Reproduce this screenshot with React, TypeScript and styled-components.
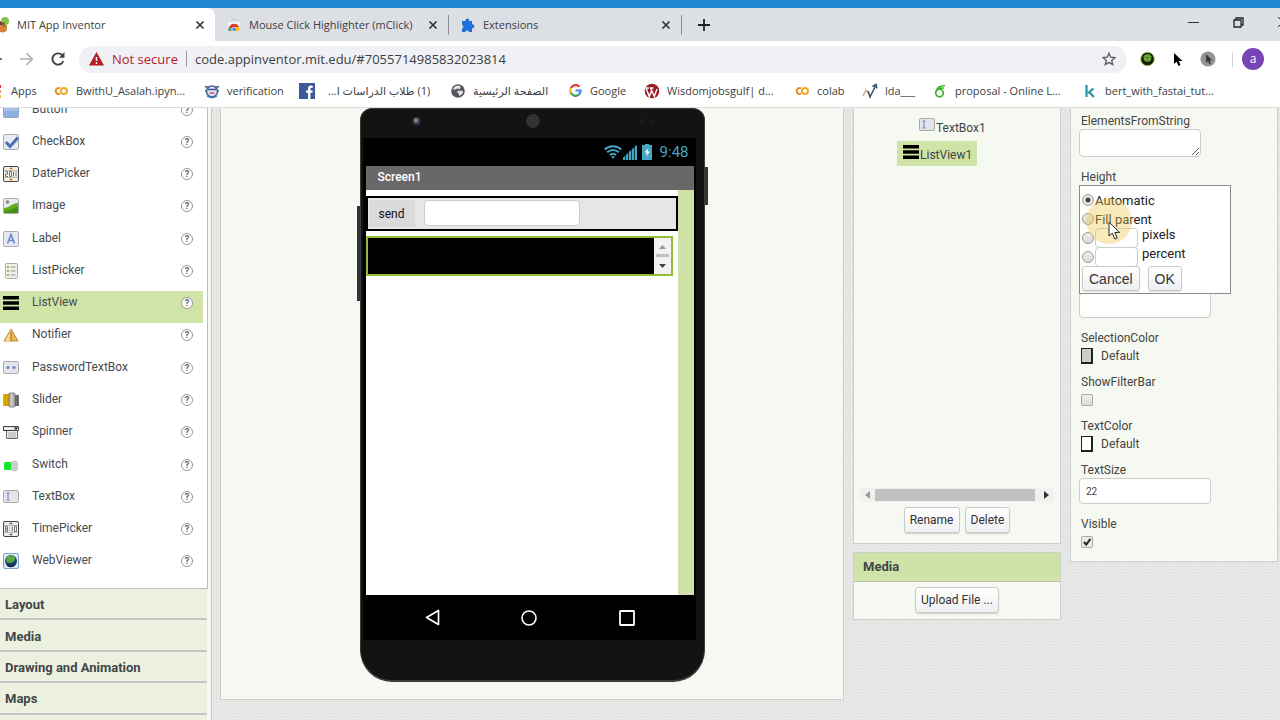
import React from "react";
import styled, { createGlobalStyle } from "styled-components";

const uiFont = '"Open Sans", "Noto Sans", "DejaVu Sans", sans-serif';
const appFont = 'Roboto, "Liberation Sans", sans-serif';

const GlobalStyle = createGlobalStyle`
  *, *::before, *::after { box-sizing: border-box; }
  body { margin: 0; background: #e6e6e6; font-family: ${appFont}; font-size: 12px; color: #444; }
  button, input, textarea { font: inherit; color: inherit; margin: 0; padding: 0; }
  button { border: 0; background: none; text-align: left; }
  a { color: inherit; text-decoration: none; }
  svg { display: block; flex: none; }
`;

const Page = styled.div`
  display: flex;
  flex-direction: column;
  height: 100vh;
  overflow: hidden;
`;

/* ---------- Browser chrome ---------- */

const Chrome = styled.header`
  flex: none;
  font-family: ${uiFont};
  background: #fff;
  border-bottom: 1px solid #dcdcdc;
`;

const TitleStrip = styled.div`
  height: 8px;
  background: #2287d5;
`;

const TabStrip = styled.div`
  display: flex;
  align-items: stretch;
  height: 33px;
  background: #dcdfe4;
`;

const Tab = styled.div<{ $active?: boolean; $width: number }>`
  display: flex;
  align-items: center;
  flex: none;
  width: ${(p) => p.$width}px;
  padding: 0 10px 0 ${(p) => (p.$active ? 0 : 12)}px;
  gap: 8px;
  background: ${(p) => (p.$active ? "#fff" : "transparent")};
  border-radius: 0 8px 0 0;
`;

const TabTitle = styled.a`
  flex: 1;
  min-width: 0;
  overflow: hidden;
  white-space: nowrap;
  font-size: 11px;
  line-height: 16px;
  color: #3c4043;
`;

const IconButton = styled.button`
  display: flex;
  align-items: center;
  justify-content: center;
  flex: none;
`;

const TabDivider = styled.span`
  align-self: center;
  flex: none;
  width: 1px;
  height: 20px;
  background: #8e9196;
`;

const NewTab = styled(IconButton)`
  width: 43px;
`;

const WindowControls = styled.div`
  display: flex;
  align-items: center;
  height: 28px;
  gap: 34px;
  margin-left: auto;
`;

const Toolbar = styled.div`
  display: flex;
  align-items: center;
  height: 34px;
  margin-top: 1px;
`;

const NavButtons = styled.div`
  display: flex;
  align-items: center;
  gap: 17px;
  width: 79px;
  flex: none;
`;

const AddressBar = styled.div`
  display: flex;
  align-items: center;
  flex: 1;
  min-width: 0;
  height: 27px;
  padding: 0 11px 0 10px;
  border-radius: 14px;
  background: #f0f1f4;
  font-size: 13px;
`;

const NotSecure = styled.span`
  margin-left: 8px;
  padding-right: 8px;
  border-right: 1px solid #9a9da1;
  line-height: 16px;
  color: #b3202c;
  white-space: nowrap;
`;

const UrlInput = styled.input`
  flex: 1;
  min-width: 0;
  margin-left: 8px;
  border: 0;
  outline: 0;
  background: transparent;
  color: #3c4043;
`;

const ToolbarEnd = styled.div`
  display: flex;
  align-items: center;
  flex: none;
  gap: 16px;
  padding: 0 16px 0 13px;
`;

const ToolbarDivider = styled.span`
  width: 1px;
  height: 15px;
  background: #d0d3d6;
`;

const Profile = styled.div`
  display: flex;
  align-items: center;
  gap: 9px;
`;

const Avatar = styled.button`
  width: 22px;
  height: 22px;
  border-radius: 50%;
  background: #7744b6;
  color: #fff;
  font-size: 12px;
  line-height: 20px;
  text-align: center;
`;

const BookmarkBar = styled.nav`
  display: flex;
  align-items: center;
  height: 31px;
  padding-bottom: 2px;
  overflow: hidden;
`;

const Bookmark = styled.a<{ $width: number }>`
  display: flex;
  align-items: center;
  flex: none;
  gap: 7px;
  width: ${(p) => p.$width}px;
  font-size: 11px;
  line-height: 16px;
  color: #3c4043;
  white-space: nowrap;
`;

const BookmarkIcon = styled.span`
  display: flex;
  justify-content: center;
  flex: none;
  width: 16px;
`;

const BookmarkLabel = styled.span<{ $rtl?: boolean }>`
  padding-left: ${(p) => (p.$rtl ? 6 : 0)}px;
`;

/* ---------- Workspace ---------- */

const Workspace = styled.main`
  display: flex;
  align-items: flex-start;
  flex: 1;
  min-height: 0;
  overflow: hidden;
  gap: 9px;
  padding-right: 2px;
  background-color: #e9e9ea;
  background-image:
    repeating-linear-gradient(0deg, rgba(0, 0, 0, 0.02) 0 1px, transparent 1px 3px),
    repeating-linear-gradient(90deg, rgba(0, 0, 0, 0.02) 0 1px, transparent 1px 3px);
`;

const Panel = styled.section`
  background: #f5f9f1;
  border: 1px solid #cdcfca;
  border-top: 0;
`;

const Palette = styled.aside`
  flex: none;
  width: 212px;
  padding-right: 3px;
  background: #f5f9f1;
  border-right: 1px solid #c6c8c4;
`;

const PaletteScroll = styled.div`
  overflow: hidden;
  background: #fff;
  border-right: 1px solid #bdbdbd;
  border-bottom: 1px solid #bdbdbd;
`;

const PaletteList = styled.ul`
  display: grid;
  grid-auto-rows: 1fr;
  height: 484px;
  margin: -11px 4px 7px 0;
  padding: 0;
  list-style: none;
`;

const PaletteRow = styled.li<{ $selected?: boolean }>`
  display: flex;
  align-items: center;
  padding: 0 10px 7px 3px;
  background: ${(p) => (p.$selected ? "#d1e4a8" : "transparent")};
`;

const PaletteName = styled.button`
  flex: 1;
  padding: 0 0 2px 13px;
  line-height: 16px;
  color: #444b50;
`;

const Help = styled.button`
  width: 12px;
  height: 12px;
  border: 1px solid #999;
  border-radius: 50%;
  background: #fff;
  font-size: 9px;
  font-weight: 700;
  line-height: 10px;
  text-align: center;
  color: #666;
`;

const Categories = styled.div`
  display: grid;
  grid-auto-rows: 1fr;
  height: 157px;
  margin-right: 1px;
`;

const Category = styled.button`
  padding: 2px 0 0 5px;
  border-bottom: 2px solid #c3c5c1;
  background: #ecf1df;
  font-size: 13px;
  font-weight: 700;
  color: #41464a;
`;

/* ---------- Phone ---------- */

const Viewer = styled(Panel)`
  display: flex;
  justify-content: center;
  flex: 1;
  min-width: 360px;
  padding-bottom: 17px;
  margin-left: -1px;
`;

const Phone = styled.div`
  position: relative;
  width: 345px;
  padding: 0 8px 40px 2px;
  background: #131313;
  border: 1px solid #3a3b3d;
  border-width: 1px 1px 2px 1px;
  border-radius: 12px 12px 32px 32px;
`;

const SideKey = styled.span<{ $side: "left" | "right"; $top: number; $height: number }>`
  position: absolute;
  ${(p) => p.$side}: -4px;
  top: ${(p) => p.$top}px;
  width: 3px;
  height: ${(p) => p.$height}px;
  background: #333436;
`;

const CameraBar = styled.div`
  display: flex;
  align-items: flex-start;
  height: 29px;
  padding: 4px 0 0 46px;
`;

const ScreenFrame = styled.div`
  padding: 0 2px 0 3px;
  background: #000;
`;

const StatusBar = styled.div`
  display: flex;
  align-items: center;
  justify-content: flex-end;
  gap: 1px;
  height: 28px;
  padding-right: 5px;
  color: #45a6c4;
  font-size: 15px;
`;

const Clock = styled.span`
  margin-left: 5px;
`;

const AppTitle = styled.div`
  height: 24px;
  padding-left: 12px;
  background: #686868;
  color: #fff;
  font-weight: 500;
  line-height: 22px;
`;

const AppBody = styled.div`
  height: 405px;
  padding: 6px 0 0;
  background: #fff;
  border-right: 16px solid #cfe3a6;
`;

const Arrangement = styled.div`
  display: flex;
  align-items: flex-start;
  height: 35px;
  gap: 9px;
  padding: 2px 0 0 1px;
  border: 2px solid #000;
  background: #e6e6e6;
`;

const SendButton = styled.button`
  width: 46px;
  height: 27px;
  background: #dadada;
  color: #111;
  text-align: center;
`;

const TextField = styled.input<{ $width: number; $height: number }>`
  width: ${(p) => p.$width}px;
  height: ${(p) => p.$height}px;
  padding-left: 6px;
  border: 1px solid #ccc;
  border-radius: 4px;
  background: #fff;
  font-size: 10px;
`;

const MockList = styled.div`
  display: flex;
  justify-content: flex-end;
  height: 40px;
  margin: 5px 5px 0 0;
  border: 2px solid #93bd33;
  background: #000;
`;

const ListScroller = styled.div`
  display: flex;
  flex-direction: column;
  align-items: center;
  justify-content: center;
  width: 17px;
  background: #f2f2f2;
`;

const AndroidNav = styled.div`
  display: flex;
  align-items: center;
  justify-content: space-between;
  height: 45px;
  padding: 0 59px;
`;

/* ---------- Component tree ---------- */

const TreeColumn = styled.div`
  display: flex;
  flex-direction: column;
  flex: none;
  gap: 8px;
  width: 208px;
`;

const Tree = styled.div`
  display: flex;
  flex-direction: column;
  align-items: flex-start;
  gap: 2px;
  height: 380px;
  padding: 6px 0 0 43px;
`;

const TreeNode = styled.button<{ $selected?: boolean; $level: number }>`
  display: flex;
  align-items: center;
  gap: 1px;
  height: 25px;
  padding: 0 5px 0 6px;
  margin-left: ${(p) => p.$level * 16}px;
  background: ${(p) => (p.$selected ? "#cfe3a6" : "transparent")};
  line-height: 16px;
`;

const NodeName = styled.span`
  padding-top: 3px;
`;

const NodeIcon = styled.span`
  padding-bottom: 4px;
`;

const HScroll = styled.div`
  display: flex;
  align-items: center;
  gap: 5px;
  height: 14px;
  margin: 0 6px;
  padding: 0 5px;
  background: #f1f1f0;
`;

const HThumb = styled.span`
  flex: 1;
  height: 12px;
  margin-right: 4px;
  background: #c1c1c1;
`;

const ButtonRow = styled.div<{ $top: number; $bottom: number }>`
  display: flex;
  justify-content: center;
  gap: 5px;
  padding: ${(p) => p.$top}px 0 ${(p) => p.$bottom}px;
`;

const GwtButton = styled.button<{ $large?: boolean }>`
  height: ${(p) => (p.$large ? 25 : 26)}px;
  padding: 0 ${(p) => (p.$large ? 6 : 5)}px;
  border: 1px solid #c9c9c9;
  border-radius: 3px;
  background: linear-gradient(#fff, #f0f0f2);
  box-shadow: 0 1px 1px rgba(0, 0, 0, 0.15);
  font-family: ${(p) => (p.$large ? '"Liberation Sans", sans-serif' : appFont)};
  font-size: ${(p) => (p.$large ? 14 : 12)}px;
  color: #333;
  white-space: nowrap;
`;

const PanelHeader = styled.h2`
  height: 30px;
  margin: 0;
  padding-left: 9px;
  border-top: 1px solid #cdcfca;
  border-bottom: 1px solid #bcc4a6;
  background: #cfe2a8;
  font-size: 13px;
  font-weight: 700;
  line-height: 28px;
  color: #41464a;
`;

/* ---------- Properties ---------- */

const Properties = styled(Panel)`
  flex: none;
  width: 208px;
  padding: 5px 0 1px 8px;
`;

const Property = styled.div<{ $gap: number }>`
  position: relative;
  margin-bottom: ${(p) => p.$gap}px;
`;

const PropertyLabel = styled.label`
  display: block;
  padding-left: 2px;
  line-height: 16px;
`;

const PropertyTextarea = styled.textarea`
  display: block;
  width: 122px;
  height: 28px;
  border: 1px solid #ccc;
  border-radius: 4px;
  background: #fff;
  resize: both;
`;

const PropertyLine = styled.div`
  display: flex;
  align-items: center;
  gap: 8px;
  height: 20px;
  padding-left: 2px;
`;

const HeightSlot = styled.div`
  display: flex;
  align-items: flex-end;
  height: 133px;
`;

const Swatch = styled.button<{ $color: string }>`
  width: 12px;
  height: 16px;
  border: 2px solid #222;
  border-width: 1px 2px 2px 1px;
  background: ${(p) => p.$color};
`;

const Check = styled.input`
  appearance: none;
  width: 12px;
  height: 12px;
  border: 1px solid #aaa;
  border-radius: 2px;
  background: linear-gradient(#eee, #dcdcdc);
  &:checked {
    background: url("data:image/svg+xml,%3Csvg xmlns='http://www.w3.org/2000/svg' viewBox='0 0 10 10'%3E%3Cpath d='M2 5l2.2 2.6L8.4 2' fill='none' stroke='%23222' stroke-width='2'/%3E%3C/svg%3E") #eaeaea;
  }
`;

const Popup = styled.div`
  position: absolute;
  top: 16px;
  left: 0;
  width: 152px;
  height: 109px;
  padding: 4px 2px 0;
  border: 1px solid #8a8c8a;
  background: #fff;
  font-size: 13px;
  color: #222;
`;

const Choice = styled.div<{ $field?: boolean }>`
  display: flex;
  align-items: ${(p) => (p.$field ? "flex-start" : "center")};
  gap: 1px;
  height: 19px;
`;

const ChoiceLabel = styled.label<{ $field?: boolean }>`
  padding: ${(p) => (p.$field ? "0 0 0 3px" : "2px 0 0")};
  line-height: ${(p) => (p.$field ? 14 : 16)}px;
`;

const Radio = styled.input`
  appearance: none;
  width: 12px;
  height: 12px;
  border: 1px solid #999;
  border-radius: 50%;
  background: linear-gradient(#eee, #d8d8d8);
  align-self: center;
  &:checked { background: radial-gradient(circle, #444 0 2px, #eaeaea 3px); }
`;

const PopupButtons = styled.div`
  display: flex;
  gap: 8px;
`;

const ClickHalo = styled.span`
  position: absolute;
  top: 12px;
  left: 6px;
  width: 46px;
  height: 46px;
  border-radius: 50%;
  background: rgba(238, 200, 80, 0.38);
  pointer-events: none;
`;

const Pointer = styled.svg`
  position: absolute;
  top: 35px;
  left: 28px;
  pointer-events: none;
`;

/* ---------- Drawings ---------- */

const Cross = () => (
  <svg width="10" height="10" viewBox="0 0 10 10" stroke="#2c2f33" strokeWidth="1.6">
    <path d="M1.5 1.5l7 7M8.5 1.5l-7 7" />
  </svg>
);

const ListIcon = () => (
  <svg width="16" height="16" viewBox="0 0 16 16">
    <path d="M0 1h16v3.600H0zM0 6.200h16v3.600H0zM0 11.400h16V15H0z" fill="#000" />
  </svg>
);

const TextBoxIcon = () => (
  <svg width="16" height="14" viewBox="0 0 16 14" fill="none">
    <rect x=".5" y=".5" width="15" height="12" rx="1.5" fill="#e4e5ea" stroke="#aaa" />
    <path d="M3.5 3h3M5 3v7M3.5 10h3" stroke="#7180b8" />
  </svg>
);

const tile = (children: React.ReactNode, fill = "#e8eaf0", stroke = "#aab") => (
  <svg width="16" height="16" viewBox="0 0 16 16">
    <rect x=".5" y=".5" width="15" height="15" rx="1.5" fill={fill} stroke={stroke} />
    {children}
  </svg>
);

const componentIcons: Record<string, React.ReactNode> = {
  Button: tile(<path d="M1 9h14v6H1z" fill="#8fb1e0" />, "#a8c2ea", "#8aa4d0"),
  CheckBox: tile(<path d="M3 8l4 4.5 8-9" fill="none" stroke="#4a70b8" strokeWidth="3" />),
  DatePicker: tile(
    <g fill="none" stroke="#666">
      <path d="M1 4.500h14M1 11.500h14" stroke="#bbb" />
      <path d="M2.500 5.500h2v2.500h-2v2.500h2.500M6.500 5.500h2v5h-2zM10.500 5.500v5M13 5.500v5" strokeWidth=".9" />
      <path d="M6.500 3L8 1.500 9.500 3zM6.500 13L8 14.500 9.500 13z" fill="#c60" stroke="#c60" strokeWidth=".5" />
    </g>,
    "#f6f2e8",
    "#444"
  ),
  Image: tile(
    <g>
      <path d="M1 10c5 0 8-5 14-5v10H1z" fill="#66b01e" />
      <path d="M1 13c6 0 9-4 14-4v6H1z" fill="#3f9410" />
      <circle cx="4.500" cy="4" r="1.800" fill="#888" />
    </g>
  ),
  Label: tile(<path d="M4.500 12.500L8 3.500l3.500 9M5.800 9.500h4.400" fill="none" stroke="#6a8cca" strokeWidth="1.700" />),
  ListPicker: (
    <svg width="16" height="16" viewBox="0 0 16 16">
      <rect x="2.500" y=".5" width="12" height="15" rx="1" fill="#eef0ea" stroke="#aaa" />
      <path d="M4 4h2M4 8h2M4 12h2" stroke="#9db55a" strokeWidth="2" />
      <path d="M7.500 4h5M7.500 8h5M7.500 12h5" stroke="#999" />
    </svg>
  ),
  ListView: <ListIcon />,
  Notifier: (
    <svg width="16" height="16" viewBox="0 0 16 16">
      <path d="M8 2L15 14H1z" fill="#f0b84a" stroke="#b98a45" strokeLinejoin="round" />
      <path d="M8 3v11H2z" fill="#f8d68e" />
      <path d="M8 5v9" stroke="#a86c20" strokeWidth="1.200" />
    </svg>
  ),
  PasswordTextBox: (
    <svg width="16" height="14" viewBox="0 0 16 14">
      <rect x=".5" y=".5" width="15" height="12" rx="1.500" fill="#e4e6ec" stroke="#aab" />
      <circle cx="5" cy="6.500" r="1.600" fill="#6a86bd" />
      <circle cx="11" cy="6.500" r="1.600" fill="#6a86bd" />
    </svg>
  ),
  Slider: (
    <svg width="16" height="16" viewBox="0 0 16 16">
      <path d="M0 2h7v12H0z" fill="#e8b400" />
      <path d="M2.500 2v12M5 2v12" stroke="#b08800" strokeWidth=".8" />
      <path d="M11 3h5v11h-5z" fill="#888" />
      <path d="M12.800 3v11M14.800 3v11" stroke="#444" strokeWidth=".9" />
      <rect x="6" y="1" width="6" height="14" rx="1" fill="#b4b4b4" stroke="#777" strokeWidth=".8" />
      <path d="M8.500 2v12" stroke="#ddd" />
    </svg>
  ),
  Spinner: (
    <svg width="16" height="16" viewBox="0 0 16 16">
      <path d="M3.500 6.500h11v8h-11z" fill="#ececec" stroke="#666" />
      <path d="M5 9h8M5 11h8M5 13h8" stroke="#aaa" />
      <path d="M.5 2.500h15v4H.5z" fill="#dde1ea" stroke="#444" />
      <path d="M2 4.500h8" stroke="#fff" />
      <path d="M11 3.500h4l-2 2.500z" fill="#122" />
    </svg>
  ),
  Switch: (
    <svg width="16" height="16" viewBox="0 0 16 16">
      <rect x="1" y="5" width="11" height="8" rx="1.500" fill="#12e52a" />
      <rect x="8" y="3.500" width="7" height="11" rx="3.500" fill="#ccc" />
    </svg>
  ),
  TextBox: <TextBoxIcon />,
  TimePicker: tile(
    <g fill="none" stroke="#666">
      <path d="M1 4.500h14M1 11.500h14" stroke="#bbb" />
      <path d="M2.500 5.500h2v5h-2zM2.500 8h2M6.800 6.500v1M6.800 9v1M9.300 5.500v5M11.500 5.500h2v5h-2z" strokeWidth=".9" />
      <path d="M6.500 3L8 1.500 9.500 3zM6.500 13L8 14.500 9.500 13z" fill="#444" strokeWidth=".5" />
    </g>,
    "#f0f1f4",
    "#444"
  ),
  WebViewer: tile(
    <g>
      <circle cx="8" cy="8" r="6" fill="#17406e" />
      <path d="M3 6c1-4 6-5 9-2 1 3-2 6-5 6S3 9 3 6z" fill="#56a944" />
      <path d="M3 11c3 3 8 2 10-1-1 5-8 6-10 1z" fill="#0b1f38" />
    </g>,
    "#dfeaf8",
    "#7ea2cf"
  ),
};

const ColabIcon = () => (
  <svg width="14" height="10" viewBox="0 0 14 10" fill="none" strokeWidth="2">
    <path d="M6 2.300A3 3 0 1 0 6 7.700" stroke="#e8901c" />
    <circle cx="10" cy="5" r="3" stroke="#f0a92c" />
  </svg>
);

const bookmarks: { label: string; width: number; rtl?: boolean; icon: React.ReactNode }[] = [
  { label: "BwithU_Asalah.ipyn...", width: 151, icon: <ColabIcon /> },
  {
    label: "verification",
    width: 95,
    icon: (
      <svg width="16" height="16" viewBox="0 0 16 16" fill="none">
        <circle cx="8" cy="8.500" r="5.500" fill="#dce6f5" stroke="#4a6398" strokeWidth="1.500" />
        <path d="M1 3.500l4 1M15 3.500l-4 1M1 8h2M13 8h2M4 6.500h8" stroke="#3b5590" strokeWidth="1.500" />
        <path d="M5.500 9h5v2h-5z" fill="#c97f7f" />
        <path d="M3 13c3 2 7 2 10 0" stroke="#2f7fc0" strokeWidth="1.500" />
      </svg>
    ),
  },
  {
    label: "(1) طلاب الدراسات ا...",
    width: 151,
    rtl: true,
    icon: (
      <svg width="16" height="16" viewBox="0 0 16 16">
        <path d="M0 0h16v16H0z" fill="#3f5a9a" />
        <path d="M9 16V9.800H7V7.400h2V5.700C9 3.600 10.200 2.600 12 2.600l1.700.1v2.200h-1.200c-.9 0-1.100.4-1.100 1.100v1.400h2.300l-.3 2.400h-2V16z" fill="#fff" />
      </svg>
    ),
  },
  {
    label: "الصفحة الرئيسية",
    width: 117,
    icon: (
      <svg width="14" height="14" viewBox="0 0 14 14">
        <circle cx="7" cy="7" r="6.800" fill="#55585c" />
        <path d="M2 5c2 2 3-1 5-.5S7 7 6 7.500 9 9 8 12c3-1 4-3 4-5-2 0-3 0-3-1.500S10 4 9 2C6 1 3 2 2 5z" fill="#fff" opacity=".85" />
        <path d="M7.500 4.500l2 1.500-2 2z" fill="#55585c" />
      </svg>
    ),
  },
  {
    label: "Google",
    width: 77,
    icon: (
      <svg width="13" height="13" viewBox="0 0 14 14" fill="none" strokeWidth="2.400">
        <path d="M11.300 3A5.600 5.600 0 0 0 2 4.500" stroke="#e34133" />
        <path d="M2 4.500a5.600 5.600 0 0 0 0 5" stroke="#f3b60b" />
        <path d="M2 9.500a5.600 5.600 0 0 0 8.500 2" stroke="#34a353" />
        <path d="M10.500 11.500A5.600 5.600 0 0 0 12.500 7H7" stroke="#4285f4" />
      </svg>
    ),
  },
  {
    label: "Wisdomjobsgulf| d...",
    width: 150,
    icon: (
      <svg width="16" height="16" viewBox="0 0 16 16" fill="none">
        <circle cx="8" cy="8" r="7.300" fill="#9d1c22" />
        <path d="M2 5l3.300 8.500L8 6.500M6.500 5l3.800 8.500L13 6M1.500 5H5M6 5h3.500" stroke="#fff" strokeWidth="1.400" />
      </svg>
    ),
  },
  { label: "colab", width: 68, icon: <ColabIcon /> },
  {
    label: "lda___",
    width: 70,
    icon: (
      <svg width="16" height="16" viewBox="0 0 16 16" fill="none" strokeWidth="1.500">
        <path d="M1 13l3-6 3 4" stroke="#e2a78e" />
        <path d="M6 8l2 6 5.500-11" stroke="#36516f" />
        <path d="M10.500 3.500L14 1.500l.8 4" stroke="#36516f" />
      </svg>
    ),
  },
  {
    label: "proposal - Online L...",
    width: 150,
    icon: (
      <svg width="14" height="14" viewBox="0 0 14 14" fill="none" stroke="#43b02a" strokeWidth="1.700">
        <circle cx="6.500" cy="9" r="3.800" />
        <path d="M3 8C4 3 7 2 12 1.500M4 4.500l7-.5" />
      </svg>
    ),
  },
  {
    label: "bert_with_fastai_tut...",
    width: 140,
    icon: (
      <svg width="12" height="14" viewBox="0 0 12 14" fill="none" stroke="#2196a8" strokeWidth="2.200">
        <path d="M2.500 1v12M9.500 4.500L4 9M5 8l5 5" />
      </svg>
    ),
  },
];

const paletteItems = Object.keys(componentIcons);
const categories = ["Layout", "Media", "Drawing and Animation", "Maps"];

const BrowserChrome = () => (
  <Chrome>
    <TitleStrip />
    <TabStrip>
      <Tab $active $width={215}>
        <svg width="9" height="16" viewBox="0 0 9 16">
          <circle cx="5" cy="4" r="4" fill="#8cc152" />
          <path d="M0 4c3 1 4 3 3 5H0z" fill="#7b3f2c" />
          <path d="M0 8h7v4c0 3-4 4-7 3z" fill="#d9813b" />
          <path d="M4 5v5" stroke="#5b8c2a" strokeWidth="2" />
        </svg>
        <TabTitle href="#app">MIT App Inventor</TabTitle>
        <IconButton aria-label="Close tab"><Cross /></IconButton>
      </Tab>
      <Tab $width={233}>
        <svg width="14" height="14" viewBox="0 0 14 14">
          <path d="M4.500 3.500c0-3 5-3 5 0" fill="none" stroke="#ccc" />
          <path d="M1 4h12v9H1z" fill="#f4f5f7" />
          <path d="M1.500 13a5.500 5.500 0 0 1 .8-4.500L5 13z" fill="#34a353" />
          <path d="M2 9C4 4.500 10.500 4.500 12.300 9H7C5 9 5 11 5 11z" fill="#da3b30" />
          <path d="M8 9h4.300c.5 1.500.4 3 0 4H7z" fill="#fbc116" />
          <circle cx="7" cy="11.300" r="1.700" fill="#4285f4" />
        </svg>
        <TabTitle href="#store">Mouse Click Highlighter (mClick)</TabTitle>
        <IconButton aria-label="Close tab"><Cross /></IconButton>
      </Tab>
      <TabDivider />
      <Tab $width={232}>
        <svg width="14" height="14" viewBox="0 0 14 14" fill="#1f6fdc">
          <path d="M1 3h3.500a1.900 1.900 0 1 1 3.600 0H11v3.400a1.900 1.900 0 1 1 0 3.700V14H7.800a1.800 1.800 0 0 0-3.500 0H1v-3.500a1.800 1.800 0 0 0 0-3.500z" />
        </svg>
        <TabTitle href="#extensions">Extensions</TabTitle>
        <IconButton aria-label="Close tab"><Cross /></IconButton>
      </Tab>
      <TabDivider />
      <NewTab aria-label="New tab">
        <svg width="12" height="12" viewBox="0 0 12 12" stroke="#222" strokeWidth="1.800">
          <path d="M6 0v12M0 6h12" />
        </svg>
      </NewTab>
      <WindowControls>
        <IconButton aria-label="Minimize">
          <svg width="11" height="10" viewBox="0 0 11 10"><path d="M0 5.500h11" stroke="#333" /></svg>
        </IconButton>
        <IconButton aria-label="Restore">
          <svg width="11" height="11" viewBox="0 0 11 11" fill="none" stroke="#222" strokeWidth="1.300">
            <path d="M1 3h7v7H1zM3 3V1h7v7H8" />
          </svg>
        </IconButton>
        <IconButton aria-label="Close">
          <svg width="2" height="10" viewBox="0 0 2 10"><path d="M0 0l3 3M0 10l3-3" stroke="#222" /></svg>
        </IconButton>
      </WindowControls>
    </TabStrip>
    <Toolbar>
      <NavButtons>
        <IconButton aria-label="Back">
          <svg width="2" height="14" viewBox="0 0 2 14"><path d="M0 7h2" stroke="#444" strokeWidth="1.600" /></svg>
        </IconButton>
        <IconButton aria-label="Forward">
          <svg width="15" height="14" viewBox="0 0 15 14" fill="none" stroke="#b0b3b7" strokeWidth="1.700">
            <path d="M1 7h12M7.500 1.200L13.300 7l-5.800 5.800" />
          </svg>
        </IconButton>
        <IconButton aria-label="Reload">
          <svg width="14" height="14" viewBox="0 0 14 14" fill="none" stroke="#3f4347" strokeWidth="1.900">
            <path d="M12.300 9A5.600 5.600 0 1 1 11 3l1.500 1.500" />
            <path d="M13.500 0v5.800H8z" fill="#3f4347" stroke="none" />
          </svg>
        </IconButton>
      </NavButtons>
      <AddressBar>
        <svg width="15" height="14" viewBox="0 0 15 14">
          <path d="M7.500 0L15 13.500H0z" fill="#b81c24" />
          <path d="M7.500 5v4M7.500 10.300v1.700" stroke="#fff" strokeWidth="1.500" />
        </svg>
        <NotSecure>Not secure</NotSecure>
        <UrlInput aria-label="Address" defaultValue="code.appinventor.mit.edu/#7055714985832023814" />
        <IconButton aria-label="Bookmark this page">
          <svg width="14" height="14" viewBox="0 0 14 14" fill="none" stroke="#55585c" strokeWidth="1.300">
            <path d="M7 1.200l1.700 4 4.300.4-3.300 2.800 1 4.200L7 10.400l-3.700 2.200 1-4.200L1 5.600l4.300-.4z" />
          </svg>
        </IconButton>
      </AddressBar>
      <ToolbarEnd>
        <svg width="15" height="16" viewBox="0 0 16 16">
          <circle cx="8" cy="8" r="7.300" fill="#14200a" stroke="#a8d060" />
          <path d="M4 5C6 2 10 2 12 5c.5 4-1 6-4 6S3.500 9 4 5z" fill="#76a83c" />
          <path d="M4 6.500h8M8 3v7" stroke="#4d7a20" strokeWidth=".8" />
        </svg>
        <svg width="13" height="16" viewBox="0 0 13 16">
          <path d="M3 2v11l2.600-2.300L7.500 15l2-.9-1.700-4H11.500z" fill="#000" />
        </svg>
        <svg width="16" height="16" viewBox="0 0 16 16">
          <circle cx="8" cy="8" r="7.600" fill="#949494" />
          <path d="M6 3v9l2-1.800 1.400 3 1.600-.8L9.800 9.500h2.700z" fill="#333" stroke="#777" strokeWidth=".5" />
        </svg>
        <Profile>
          <ToolbarDivider />
          <Avatar aria-label="Profile">a</Avatar>
        </Profile>
      </ToolbarEnd>
    </Toolbar>
    <BookmarkBar>
      <Bookmark href="#apps" $width={53}>
        <svg width="4" height="14" viewBox="0 0 4 14">
          <path d="M0 1h1v3H0z" fill="#d33" />
          <path d="M0 6h1v3H0z" fill="#e88" />
          <path d="M0 11h1v3H0z" fill="#eb3" />
        </svg>
        <span>Apps</span>
      </Bookmark>
      {bookmarks.map((b) => (
        <Bookmark key={b.label} href="#bookmark" $width={b.width}>
          <BookmarkIcon>{b.icon}</BookmarkIcon>
          <BookmarkLabel $rtl={b.rtl} dir={b.rtl ? "rtl" : "auto"}>{b.label}</BookmarkLabel>
        </Bookmark>
      ))}
    </BookmarkBar>
  </Chrome>
);

const PhonePreview = () => (
  <Phone>
    <SideKey $side="left" $top={97} $height={95} />
    <SideKey $side="right" $top={58} $height={38} />
    <CameraBar>
      <svg width="260" height="18" viewBox="0 0 260 18">
        <circle cx="7.500" cy="8" r="4" fill="#3c3c48" />
        <circle cx="7" cy="7.500" r="2" fill="#8888aa" />
        <circle cx="124" cy="8" r="7" fill="#303030" />
        <path d="M119 5h10M118 8h12M119 11h10" stroke="#444" strokeDasharray="1 1" />
        <circle cx="233" cy="8" r="2.500" fill="#1c1c1c" />
        <circle cx="244" cy="8" r="2" fill="#1c1c1c" />
      </svg>
    </CameraBar>
    <ScreenFrame>
      <StatusBar>
        <svg width="18" height="14" viewBox="0 0 18 14" fill="none" stroke="#45a6c4" strokeWidth="2">
          <path d="M.7 4.500a12 12 0 0 1 16.600 0M3.200 7.300a8.500 8.500 0 0 1 11.600 0M5.800 10a5 5 0 0 1 6.400 0" />
          <path d="M7 11.300h4L9 14z" fill="#45a6c4" stroke="none" />
        </svg>
        <svg width="14" height="15" viewBox="0 0 14 15" fill="#45a6c4">
          <path d="M0 12.500L2.200 10.500V15H0zM2.900 9.800L5.100 7.800V15H2.900zM5.800 7.100L8 5.100V15H5.800zM8.700 4.400l2.200-2V15H8.700zM11.600 1.800L14 0v15h-2.400z" />
        </svg>
        <svg width="16" height="16" viewBox="0 0 16 16">
          <path d="M4 1h3V0h4v1h3v15H4z" fill="#45a6c4" />
          <path d="M10.500 4L6.500 8.500H9L8 12.500l4-5H9.500z" fill="#fff" />
        </svg>
        <Clock>9:48</Clock>
      </StatusBar>
      <AppTitle>Screen1</AppTitle>
      <AppBody>
        <Arrangement>
          <SendButton>send</SendButton>
          <TextField aria-label="TextBox1" $width={156} $height={26} />
        </Arrangement>
        <MockList>
          <ListScroller>
            <svg width="13" height="27" viewBox="0 0 13 27">
              <path d="M6.500 2L10 6H3z" fill="#9a9a9a" />
              <path d="M0 11h13v3H0z" fill="#c1c1c1" />
              <path d="M6.500 25L10 21H3z" fill="#444" />
            </svg>
          </ListScroller>
        </MockList>
      </AppBody>
      <AndroidNav>
        <svg width="15" height="17" viewBox="0 0 15 17" fill="none" stroke="#fff" strokeWidth="1.700">
          <path d="M13.500 1.500v14L1.500 8.500z" strokeLinejoin="round" />
        </svg>
        <svg width="16" height="16" viewBox="0 0 16 16" fill="none" stroke="#fff" strokeWidth="1.600">
          <circle cx="8" cy="8" r="7" />
        </svg>
        <svg width="16" height="16" viewBox="0 0 16 16" fill="none" stroke="#fff" strokeWidth="1.800">
          <rect x="1" y="1" width="14" height="14" rx=".5" />
        </svg>
      </AndroidNav>
    </ScreenFrame>
  </Phone>
);

const HeightPopup = () => (
  <Popup>
    <Choice>
      <Radio type="radio" name="height" id="h-auto" defaultChecked />
      <ChoiceLabel htmlFor="h-auto">Automatic</ChoiceLabel>
    </Choice>
    <Choice>
      <Radio type="radio" name="height" id="h-fill" />
      <ChoiceLabel htmlFor="h-fill">Fill parent</ChoiceLabel>
    </Choice>
    <Choice $field>
      <Radio type="radio" name="height" id="h-pixels" />
      <TextField aria-label="Height in pixels" $width={43} $height={20} />
      <ChoiceLabel $field htmlFor="h-pixels">pixels</ChoiceLabel>
    </Choice>
    <Choice $field>
      <Radio type="radio" name="height" id="h-percent" />
      <TextField aria-label="Height in percent" $width={43} $height={20} />
      <ChoiceLabel $field htmlFor="h-percent">percent</ChoiceLabel>
    </Choice>
    <PopupButtons>
      <GwtButton $large>Cancel</GwtButton>
      <GwtButton $large>OK</GwtButton>
    </PopupButtons>
    <ClickHalo />
    <Pointer width="13" height="19" viewBox="0 0 13 19">
      <path d="M1 1v14l3.300-2.800L6.800 18l2.400-1-2.400-5.600H11.500z" fill="#fff" stroke="#222" strokeLinejoin="round" />
    </Pointer>
  </Popup>
);

export default function App() {
  return (
    <Page>
      <GlobalStyle />
      <BrowserChrome />
      <Workspace>
        <Palette>
          <PaletteScroll>
            <PaletteList>
              {paletteItems.map((name) => (
                <PaletteRow key={name} $selected={name === "ListView"}>
                  {componentIcons[name]}
                  <PaletteName>{name}</PaletteName>
                  <Help aria-label={`Help for ${name}`}>?</Help>
                </PaletteRow>
              ))}
            </PaletteList>
          </PaletteScroll>
          <Categories>
            {categories.map((c) => (
              <Category key={c}>{c}</Category>
            ))}
            <Category aria-label="More" />
          </Categories>
        </Palette>

        <Viewer>
          <PhonePreview />
        </Viewer>

        <TreeColumn>
          <Panel>
            <Tree>
              <TreeNode $level={1}>
                <NodeIcon><TextBoxIcon /></NodeIcon>
                <NodeName>TextBox1</NodeName>
              </TreeNode>
              <TreeNode $level={0} $selected>
                <NodeIcon><ListIcon /></NodeIcon>
                <NodeName>ListView1</NodeName>
              </TreeNode>
            </Tree>
            <HScroll>
              <svg width="5" height="8" viewBox="0 0 5 8"><path d="M5 0v8L0 4z" fill="#999" /></svg>
              <HThumb />
              <svg width="5" height="8" viewBox="0 0 5 8"><path d="M0 0v8l5-4z" fill="#333" /></svg>
            </HScroll>
            <ButtonRow $top={5} $bottom={10}>
              <GwtButton>Rename</GwtButton>
              <GwtButton>Delete</GwtButton>
            </ButtonRow>
          </Panel>
          <Panel>
            <PanelHeader>Media</PanelHeader>
            <ButtonRow $top={5} $bottom={6}>
              <GwtButton>Upload File ...</GwtButton>
            </ButtonRow>
          </Panel>
        </TreeColumn>

        <Properties>
          <Property $gap={12}>
            <PropertyLabel htmlFor="elements">ElementsFromString</PropertyLabel>
            <PropertyTextarea id="elements" />
          </Property>
          <Property $gap={12}>
            <PropertyLabel htmlFor="height">Height</PropertyLabel>
            <HeightSlot>
              <TextField id="height" $width={132} $height={26} />
            </HeightSlot>
            <HeightPopup />
          </Property>
          <Property $gap={8}>
            <PropertyLabel htmlFor="selection-color">SelectionColor</PropertyLabel>
            <PropertyLine>
              <Swatch id="selection-color" $color="#ccc" />
              <span>Default</span>
            </PropertyLine>
          </Property>
          <Property $gap={8}>
            <PropertyLabel htmlFor="filter-bar">ShowFilterBar</PropertyLabel>
            <PropertyLine>
              <Check type="checkbox" id="filter-bar" />
            </PropertyLine>
          </Property>
          <Property $gap={8}>
            <PropertyLabel htmlFor="text-color">TextColor</PropertyLabel>
            <PropertyLine>
              <Swatch id="text-color" $color="#fff" />
              <span>Default</span>
            </PropertyLine>
          </Property>
          <Property $gap={12}>
            <PropertyLabel htmlFor="text-size">TextSize</PropertyLabel>
            <TextField id="text-size" defaultValue="22" $width={132} $height={26} />
          </Property>
          <Property $gap={8}>
            <PropertyLabel htmlFor="visible">Visible</PropertyLabel>
            <PropertyLine>
              <Check type="checkbox" id="visible" defaultChecked />
            </PropertyLine>
          </Property>
        </Properties>
      </Workspace>
    </Page>
  );
}
